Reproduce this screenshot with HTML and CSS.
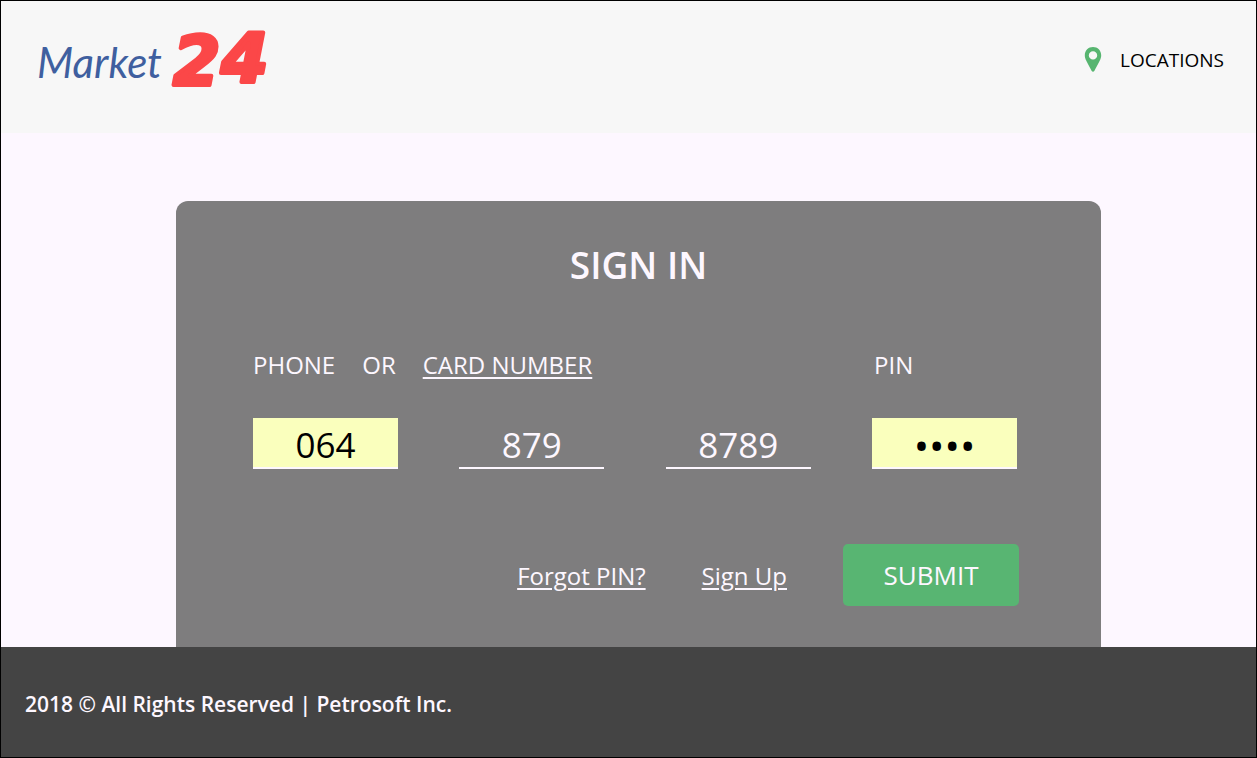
FILE: index.html
```
<!DOCTYPE html>
<html lang="en">
<head>
    <meta charset="UTF-8">
    <meta name="viewport" content="width=device-width, initial-scale=1.0">
    <title>Market 24 - Sign In</title>
    <link rel="stylesheet" href="styles.css">
</head>
<body>

<header class="header">
    <a class="logo" href="#" aria-label="Market 24">
        <svg width="260" height="84" viewBox="0 0 260 84">
            <text class="logo-market" x="4" y="53">Market</text>
            <text class="logo-number" x="140 188" y="60 57">24</text>
        </svg>
    </a>
    <a class="locations" href="#">
        <svg width="18" height="26" viewBox="0 0 18 26">
            <path fill="#57b570" fill-rule="evenodd" d="M9 0C4.300 0 .8 3.500.8 8.200c0 2 .6 3.700 1.500 5.600C4.100 17.400 6.300 21.500 7.700 24c.6 1.100 2 1.100 2.600 0C11.700 21.500 13.900 17.400 15.700 13.800 16.600 11.900 17.200 10.200 17.200 8.200 17.200 3.500 13.700 0 9 0zM9 4.200a4.200 4.200 0 1 1 0 8.400 4.200 4.200 0 0 1 0-8.400z"/>
        </svg>
        <span>LOCATIONS</span>
    </a>
</header>

<main class="main">
    <form class="card" onsubmit="return false">
        <h1>SIGN IN</h1>

        <div class="labels">
            <label for="phoneArea">PHONE</label>
            <span>OR</span>
            <a href="#">CARD NUMBER</a>
            <label class="pin-label" for="pin">PIN</label>
        </div>

        <div class="fields">
            <input class="filled" type="text" id="phoneArea" value="064">
            <input type="text" aria-label="Phone prefix" value="879">
            <input type="text" aria-label="Phone line number" value="8789">
            <input class="filled pin" type="password" id="pin" value="1234">
        </div>

        <div class="actions">
            <a href="#">Forgot PIN?</a>
            <a href="#">Sign Up</a>
            <button type="submit">SUBMIT</button>
        </div>
    </form>
</main>

<footer class="footer">2018 © All Rights Reserved | Petrosoft Inc.</footer>

</body>
</html>
```
FILE: styles.css
```
* {
    box-sizing: border-box;
}

body {
    margin: 0;
    min-height: 100vh;
    display: flex;
    flex-direction: column;
    border: 1px solid #000;
    background-color: #fdf7ff;
    font-family: 'Segoe UI', 'Open Sans', 'Noto Sans', sans-serif;
}

.header {
    display: flex;
    justify-content: space-between;
    align-items: flex-start;
    height: 132px;
    padding: 24px 32px;
    background-color: #f7f7f7;
}

.logo svg {
    display: block;
}

.logo-market {
    font-family: Lato, sans-serif;
    font-size: 42px;
    font-style: italic;
    fill: #3f5f9f;
}

.logo-number {
    font-family: 'DejaVu Sans', sans-serif;
    font-size: 68px;
    font-weight: 700;
    font-style: italic;
    fill: #fb4748;
    stroke: #fb4748;
    stroke-width: 4px;
    stroke-linejoin: round;
}

.locations {
    display: flex;
    align-items: center;
    gap: 18px;
    margin-top: 20px;
    color: #000;
    font-size: 19px;
    line-height: 30px;
    text-decoration: none;
}

.main {
    flex: 1;
    display: flex;
    padding: 68px 155px 0 175px;
}

.card {
    flex: 1;
    padding: 40px 0;
    border-radius: 12px 12px 0 0;
    background-color: #7e7d7e;
    color: #fdf7ff;
}

.card a {
    color: #fdf7ff;
    text-underline-offset: 3px;
    text-decoration-thickness: 2px;
}

h1 {
    margin: 0;
    font-size: 37px;
    font-weight: 600;
    line-height: 48px;
    text-align: center;
}

.labels,
.fields {
    padding: 0 84px 0 77px;
}

.labels {
    display: flex;
    gap: 27px;
    margin-top: 56px;
    font-size: 24px;
    line-height: 40px;
}

.pin-label {
    width: 143px;
    margin-left: auto;
}

.fields {
    display: flex;
    justify-content: space-between;
    margin-top: 33px;
}

.fields input {
    width: 145px;
    height: 51px;
    padding: 4px 0 0;
    border: none;
    border-bottom: 2px solid #fdf7ff;
    border-radius: 0;
    background-color: transparent;
    color: #fdf7ff;
    font-family: inherit;
    font-size: 35px;
    text-align: center;
}

.fields .filled {
    background-color: #faffbd;
    color: #000;
}

.fields .pin {
    font-size: 41px;
}

.actions {
    display: flex;
    justify-content: flex-end;
    align-items: center;
    gap: 56px;
    margin-top: 75px;
    padding-right: 82px;
    font-size: 24px;
}

.actions button {
    width: 176px;
    height: 62px;
    padding: 0;
    border: none;
    border-radius: 5px;
    background-color: #58b572;
    color: #fdf7ff;
    font-family: inherit;
    font-size: 26px;
    cursor: pointer;
}

.footer {
    padding: 42px 24px 38px;
    background-color: #444;
    color: #fdf7ff;
    font-size: 21px;
    font-weight: 600;
    line-height: 30px;
}
```
